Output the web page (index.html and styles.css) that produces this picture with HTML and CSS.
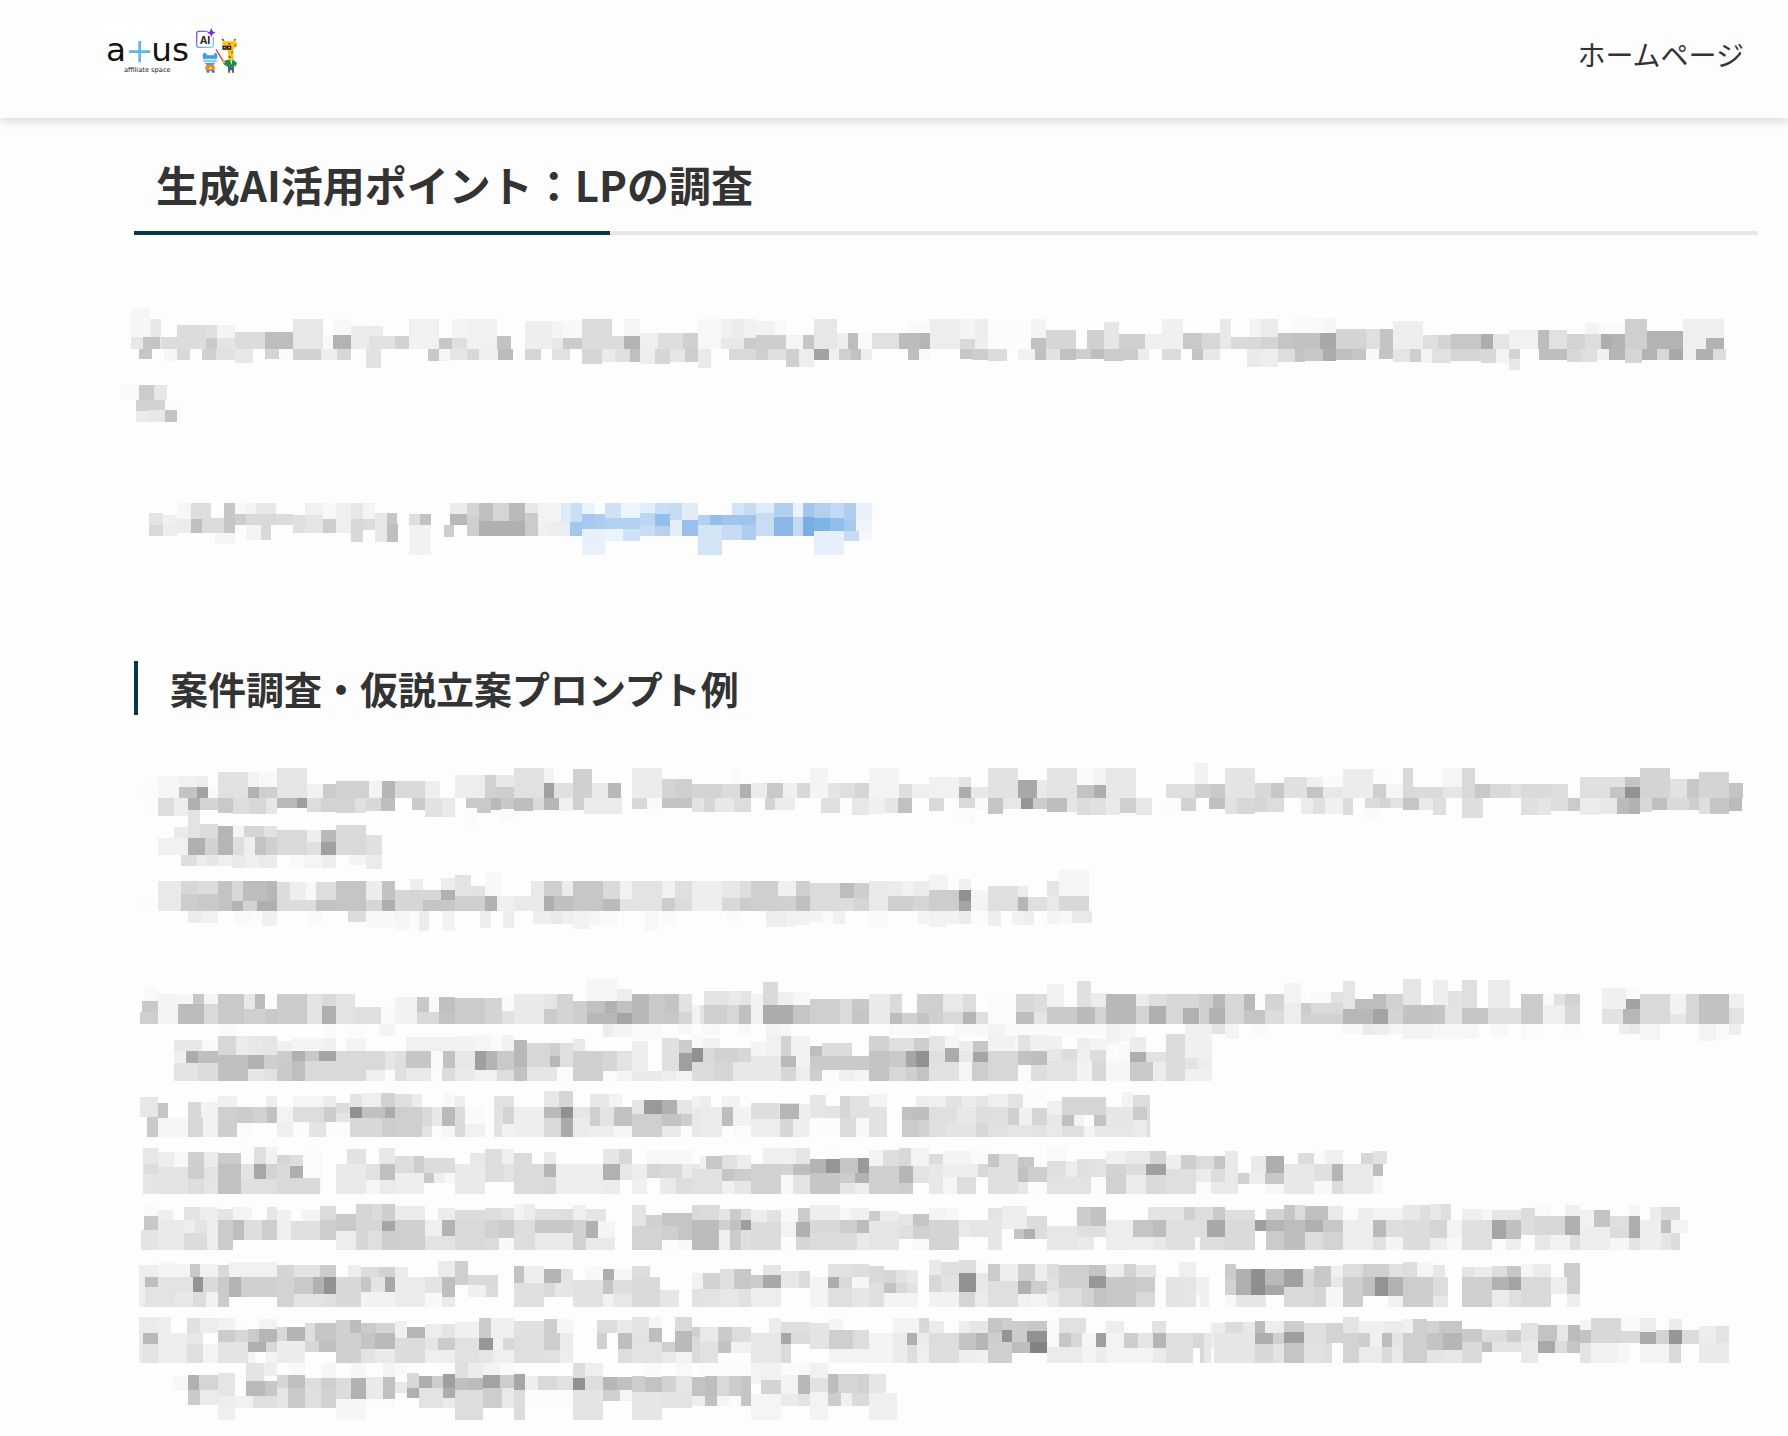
FILE: index.html
```html
<!DOCTYPE html>
<html lang="ja">
<head>
    <meta charset="UTF-8">
    <meta name="viewport" content="width=device-width, initial-scale=1.0">
    <title>生成AI活用ポイント：LPの調査</title>
    <link rel="stylesheet" href="styles.css">
</head>
<body>
    <header class="site-header">
        <a class="logo" href="#" aria-label="a+us affiliate space">
            <svg viewBox="36 36 414 192">
                <defs>
                    <linearGradient id="aiFrame" x1="0" y1="0" x2="1" y2="1">
                        <stop offset="0" stop-color="#8a3cf0"/>
                        <stop offset="1" stop-color="#74dcec"/>
                    </linearGradient>
                </defs>
                <text class="logo-main" x="48" y="152">a</text>
                <path d="M149 93v64M117 125h64" stroke="#5cb6e8" stroke-width="8"/>
                <text class="logo-main" x="184" y="152">us</text>
                <text class="logo-sub" x="102" y="185">affiliate space</text>
                <!-- AI -->
                <path d="M353 64h-27q-6 0-6 6v36q0 6 6 6h38q6 0 6-6V82" fill="none" stroke="url(#aiFrame)" stroke-width="4"/>
                <text class="logo-ai" x="329" y="102">AI</text>
                <path d="M364 54l4 10 9 4-9 4-4 10-4-10-9-4 9-4z" fill="#7a2be8"/>
                <!-- マスコット -->
                <path d="M338 142q-2-14 8-14l6 8h18l6-8q8 2 6 14l-5 10q0 14-17 14t-17-14z" fill="#3aa0ea"/>
                <path d="M336 151l12-5h26l11 5-6 8h-37z" fill="#d5edfb"/>
                <path d="M341 153h38" stroke="#2778bd" stroke-width="2"/>
                <path d="M349 165h22l5 8-5 11h-22l-4-10z" fill="#f08a24"/>
                <path d="M350 180v8h8v-8M365 180v8h9v-8" fill="#3a83c9"/>
                <circle cx="361" cy="174" r="4" fill="#ffd36b"/>
                <path d="M378 118l22 36" stroke="#e23a3a" stroke-width="4"/>
                <path d="M402 92l-6-5M432 92l4-5" stroke="#8a5a20" stroke-width="5"/>
                <path d="M398 94h38q8 4 4 12l-10 14 1 34h-16l-1-32-14-2q-5-14-2-26z" fill="#f9bf22"/>
                <path d="M415 99h6v6h-6zM434 104h5v6h-5zM424 124h5v6h-5zM416 138h6v6h-6z" fill="#a8641c"/>
                <path d="M399 109h9v8h-9zM413 109h9v8h-9zM408 112h5" fill="none" stroke="#222" stroke-width="4"/>
                <path d="M400 153l12-3h18l11 8-4 12h-25l-12-8z" fill="#208a43"/>
                <path d="M398 153l6 6M437 168l-6 2" stroke="#f9bf22" stroke-width="6"/>
                <path d="M421 151l3 14 3-14z" fill="#fff"/>
                <path d="M414 169h18v12h-18z" fill="#2b68b2"/>
                <path d="M414 179h6v9h-6zM426 179h6v9h-6z" fill="#8d5a26"/>
            </svg>
        </a>
        <nav class="site-nav">
            <a href="#">ホームページ</a>
        </nav>
    </header>

    <main class="article">
        <h2>生成AI活用ポイント：LPの調査</h2>
        <svg class="mosaic" id="intro" viewBox="0 0 1788 150" aria-hidden="true"></svg>
        <svg class="mosaic mosaic-link" id="link" viewBox="0 0 1788 90" aria-hidden="true"></svg>
        <h3>案件調査・仮説立案プロンプト例</h3>
        <svg class="mosaic" id="summary" viewBox="0 0 1788 190" aria-hidden="true"></svg>
        <svg class="mosaic mosaic-list" id="list" viewBox="0 0 1788 460" aria-hidden="true"></svg>
    </main>

    <script src="script.js"></script>
</body>
</html>
```
FILE: styles.css
```css
:root {
    --bg: #fdfdfd;
    --text: #333;
    --main: #04384c;
    --line: #e8e8e8;
}

* {
    box-sizing: border-box;
    margin: 0;
    padding: 0;
}

body {
    background: var(--bg);
    color: var(--text);
    font-family: "Noto Sans CJK JP", sans-serif;
}

a {
    color: inherit;
    text-decoration: none;
}

.site-header {
    display: flex;
    align-items: center;
    justify-content: space-between;
    height: 118px;
    padding: 0 44px 10px 102px;
    background: var(--bg);
    box-shadow: 0 2px 10px rgba(0, 0, 0, 0.18);
}

.logo svg {
    display: block;
    width: 138px;
    height: 64px;
    background: #fff;
}

.logo-main {
    font: 98px "DejaVu Sans", sans-serif;
    fill: #111;
}

.logo-sub {
    font: 20px "DejaVu Sans", sans-serif;
    fill: #222;
}

.logo-ai {
    font: bold 32px "Liberation Sans", sans-serif;
    fill: #222;
}

.site-nav {
    font-size: 28px;
    line-height: 40px;
}

h2 {
    margin: 37px 30px 55px 134px;
    font-size: 42px;
    line-height: 58px;
}

h2::before {
    content: "";
    float: left;
    width: 22px;
    height: 58px;
}

h2::after {
    content: "";
    display: block;
    height: 4px;
    margin-top: 18px;
    background: linear-gradient(90deg, var(--main) 29.3%, var(--line) 29.3%);
}

h3 {
    margin: 91px 30px 35px 134px;
    padding-left: 32px;
    border-left: 4px solid var(--main);
    font-size: 38px;
    line-height: 54px;
}

/* モザイク */
.mosaic {
    display: block;
    width: 100%;
    height: auto;
    shape-rendering: crispEdges;
}

.mosaic-link {
    margin-top: 40px;
}

.mosaic-list {
    margin-top: 30px;
}
```
FILE: script.js
```javascript
// 各列の開始位置と幅（データは1568分割）
const columns = {
    a: [120, 600],
    b: [700, 560],
    c: [1200, 580],
    d: [120, 780]
};

// [列, 基準線, "x,端,色 ..."]  色のないxは空白、端は基準線の上でも下でもよい
const mosaics = {
    intro: [
        ['a', 177, '29,54,f6 78,87,e8 107,141,dc 149,105,dc 225,105,e0 253,105,f4 301,126,dc 379,126,bd 452,87,e7 531,135,f8 557,87,f8 604,108,ec 651,108,eb 687,138,e1 719,138,d2 755,87,f1 834,144,c6 868,87,f3 907,87,f1 985,138,c3 1022 1058,93,ee 1129,93,f4 1158,93,f8 1207,87,dc 1286,138,dc 1317,87,f5 1359,129,ef 1406,129,de 1471,129,d0 1511,87,f7 1568'],
        ['a', 177, '29,141,e8 60,141,c4 105 225,144,ca 253,144,e4 301 557,135,b3 604 651,138,e1 687 868,144,e0 907 1129,144,e8 1158,144,cb 1207 1317,138,b3 1359'],
        ['a', 177, '50,207,c6 84 115,213,f6 149,210,d8 183 214,210,d0 251,210,e1 301,219,e8 348 379,207,d4 416,207,fa 452,210,d2 525,210,ee 567,210,d7 604 643,234,e2 682 805,213,c8 834,213,f5 862,210,e6 907,210,d8 938,210,ef 988,210,bb 1027 1058,210,d6 1100 1129,210,e1 1176 1207,222,d6 1260,216,ea 1294,216,e0 1333,216,bf 1359,222,ed 1398,222,d6 1437,216,e6 1477,216,cd 1511,234,ec 1544'],
        ['a', 330, '0,285,f9 50,285,cb 89,285,e7 123'],
        ['a', 330, '42,363,d2 76,360,d2 118,360,fb 149'],
        ['a', 396, '42,363,eb 76,360,e8 118,360,c3 149'],
        ['b', 177, '0,87,f7 59,87,f1 90,87,eb 123,87,f1 157,93,f2 210,93,f9 241,135,f5 288,135,c6 319,87,e7 384,129,ee 414,129,bd 442,129,f9 482,129,e1 557,129,bc 588,96,f9 644,87,ed 728,87,f4 770,87,ed 806,87,fc 889 927,87,f4 969,120,d6 1053 1084,120,d0 1131,96,e6 1173,132,d0 1246,132,f0 1294,87,f0 1352,129,c9 1406,129,d7 1456,87,e9 1487,141,d9 1540,87,f4 1568'],
        ['b', 177, '59,144,e8 123,144,cb 157,135,ce 241 588,129,bc 616,129,b5 644 728,147,d9 770,147,ef 806 927,144,c1 969 1540,141,d9 1568'],
        ['b', 177, '0,234,ea 31 81,210,d9 157,210,cf 190,210,df 241,231,d0 277,231,ed 319,210,a2 361,210,f0 389,210,cf 423,210,c2 451,210,ee 482 582,210,bf 613,210,f9 644 728,207,c7 762,210,cd 806,213,dc 860 890,210,f1 938,210,c0 969,210,e2 1008,210,c1 1053,207,ce 1095,207,be 1131,213,cb 1187,210,cc 1226,210,ed 1257 1294,210,dc 1347 1378,210,c4 1408,210,e6 1456 1532,231,e9 1568'],
        ['c', 177, '0,129,c9 5,129,d7 54,87,e9 84,141,d9 135,87,f3 165,87,eb 211,129,c5 251,84,fa 301,84,f9 338,84,f6 368,117,d4 449,117,df 487,117,c4 522,93,ee 603,135,df 643,135,d3 679,132,c7 760,132,ad 792,132,e5 835,120,f1 914,120,bd 944,120,e1 992,132,d3 1041,99,f3 1079,99,fa 1149,87,cf 1208,123,b3 1306,87,ef 1417'],
        ['c', 177, '135,141,d9 165,141,d4 211 251,129,c2 324,129,a7 368 1041,132,dd 1084,132,ae 1114,132,b4 1149 1368,144,b3 1417'],
        ['c', 177, '0,210,c4 8,210,e8 54 127,231,ea 165,231,ed 211,216,dd 257,216,c4 284,213,c8 333,213,ac 368,210,bf 411,210,c5 449,207,f8 484,207,c4 522,216,e5 568,216,cf 597,219,f4 627,219,e1 679,213,d5 760,219,d8 800,219,f3 835,240,e8 865 916,210,be 992,216,d8 1030,216,df 1073,210,f0 1106,210,b5 1149,219,d5 1195,210,b3 1235,210,d8 1268,210,a8 1306,210,f0 1341,210,b0 1387,210,dd 1422'],
        ['c', 177, '835,207,d4 865']
    ],
    link: [
        ['d', 69, '115,117,f6 143,117,dd 183 209,159,c6 231,102,f8 253,102,f3 273,102,e8 314 372,105,f1 408,117,f8 434,117,ef 464,117,e7 488,117,f4 513 663,102,ec 698,108,d5 722,123,c0 750,123,d5 782,168,b9 814,99,e8 840,126,f3 887,126,dfeaf7 907,126,c8def4 929,102,ebf3fb 955 975,114,cfe1f6 1007,114,ecf4fc 1045,99,e3eef9 1075,102,c8def4 1106,120,c5daf3 1130,120,e2ecf9 1162 1230,105,d2e4f6 1254,105,c5dbf3 1279,99,dfebfa 1315,111,b3cfee 1353,111,e9f2fb 1373,111,a3c6ed 1395,114,b3d0ef 1427,114,c1d9f2 1455,123,b1cdee 1480,123,e9f2fb 1512'],
        ['d', 168, '58,99,e4 86,105,f0 115 698,108,cf 722,123,b0 814,99,cb 840,126,f0 864,126,e9eef4 905,126,a3c8ef 929 1075,138,b7d2f0 1106,120,e5eef9 1130,120,9ac1ec 1162 1279,99,c8ddf3 1315,111,8ab6e8 1353,111,c3daf4 1373,111,7aade4 1395'],
        ['d', 168, '58,135,d9 86,135,ed 115'],
        ['d', 159, '115,117,ec 143,117,c0 164,114,dc 209 348,105,df 372,105,e5 408,117,cd 434,117,ef 464'],
        ['d', 159, '191,192,f5 231'],
        ['d', 135, '231,102,cd 253,102,d9 314,102,dc 348 581,102,df 603,102,c2 625 663,102,b9 698 1162,105,b3d0f0 1186,105,93beea 1210,105,a0c4ec 1279'],
        ['d', 135, '253,180,f3 283,180,d9 304 581,225,f2 625 651,171,cd 671 1162,225,d3e4f5 1210,180,c6dbf3 1250,180,adcdef 1279'],
        ['d', 186, '464,117,d8 488 513,99,e8 537,132,bf 559'],
        ['d', 150, '488,117,dc 513'],
        ['d', 132, '537,99,c6 557'],
        ['d', 147, '929,102,a5c9ef 955,102,accdf1 975,114,b2d1f1 1045'],
        ['d', 138, '1045,99,bed7f1 1075,102,94bfea 1106'],
        ['d', 147, '929,225,e8f1fb 975,183,ebf3fb 1011,183,cfe2f5 1045'],
        ['d', 138, '1045,168,c8ddf4 1075'],
        ['d', 153, '1395,114,7eb3e7 1427,114,8fbfec 1455,123,a6caee 1480,123,eef5fd 1512'],
        ['d', 153, '1395,225,e7f0fa 1455,183,c6dbf4 1485,180,f5f9fe 1512']
    ],
    summary: [
        ['a', 144, '60,99,fb 99,78,f6 154,78,f1 201,78,ed 230,111,f8 256,66,e1 335,66,f3 363,66,f8 410,54,e5 489,102,f1 531,102,cb 564,93,d1 651,93,f3 685,93,b6 719,93,d9 797,93,ee 836 875,75,ed 954,75,d1 983,75,e8 1030,54,e1 1108,54,f3 1134,99,e0 1184,57,d0 1233,99,ea 1275,99,b8 1309 1338,54,ec 1416,87,d4 1450,87,cf 1495,102,d4 1568'],
        ['a', 144, '154,111,c4 201,111,a2 230 335,111,b1 363,111,cf 410 983,111,cd 1030 1108,99,a1 1134'],
        ['a', 144, '68,195,fb 99,198,dd 141,198,ee 178,180,b0 209,180,d4 256,189,c9 295,192,dd 340,192,d7 382,192,e6 410,174,b9 463,174,9e 489,186,dd 525,186,d3 564,189,d3 614,189,e0 643,183,d8 682,183,be 719 763,180,c9 797,201,e2 841,201,ea 875 904,174,c9 933,189,c9 970,180,b9 996,177,c8 1030,183,be 1079,180,da 1108,180,b6 1147,183,f0 1184,180,cf 1213,192,eb 1312 1338,177,d8 1377,177,f9 1416,174,c4 1495,186,e2 1526,186,d8 1555,186,e5 1568'],
        ['a', 180, '178,264,e3 209'],
        ['a', 174, '904,240,fb 933'],
        ['a', 177, '996,213,fa 1030'],
        ['a', 315, '99,264,f1 141,231,ea 178,264,b0 209,222,dc 256,228,b5 295,228,f4 324,228,d5 376,228,e2 410,240,d9 489,240,ee 525,240,b8 564,225,d9 643,255,e0 685'],
        ['a', 315, '141,264,f1 178,264,b0 222,264,d2 256 295,261,de 324,261,ee 353,261,c3 382,261,cf 410 489,276,e1 525,276,a0 564'],
        ['a', 315, '159,348,de 201,348,ec 227,348,e6 256,348,ef 293,354,ea 329,354,f0 364,354,eb 410 444,354,f9 481,354,f5 528,354,ee 564 598,345,f3 643,357,eb 685'],
        ['a', 483, '50,447,fb 99,393,e9 159,393,d7 204,393,dd 256,393,c3 293,393,d8 321,393,bd 384,393,b6 410,396,dc 444,396,ee 486,396,f8 512,396,dd 564,393,c5 643,393,ec 685,393,c2 719,420,d6 758,387,ee 792,420,d7 839,384,ed 875,375,e3 917,408,e2 954,366,f8 996,438,ee 1030,438,ea 1074,393,e9 1108,393,cf 1155,393,ec 1184,393,c7 1262,393,da 1307,393,f1 1338,393,e3 1416,393,f1 1450,393,df 1495,393,ee 1568'],
        ['a', 483, '159,432,cd 204,432,ca 256 293,453,b4 321,453,d3 358,453,af 410 444,450,dd 512,450,c2 564 643,450,d6 685,450,ae 719 758,420,d6 792,450,c5 839,420,b0 875,438,cf 954,438,b2 985,438,ef 1030 1108,438,ae 1134,438,c0 1184 1262,447,bb 1307,447,e3 1338 1416,444,cc 1450,444,dc 1495'],
        ['a', 483, '839,450,c7 875'],
        ['a', 483, '178,519,ec 211,519,f1 256 299,528,f9 342,528,fb 371,528,f0 410 489,528,fa 528 596,516,dc 643,531,f8 719,540,f6 755,540,fb 781,543,ed 808 844,543,f2 875 941,534,ed 970 1001,534,ed 1030 1079,522,ee 1126,522,e9 1155,522,f0 1184,537,f2 1228,525,f5 1254,525,f9 1299 1372,543,f7 1405,528,fa 1450'],
        ['b', 144, '0,102,d3 62,102,dc 90,57,fb 112,102,b1 143,99,ec 188,99,c9 232,99,f0 272,99,d8 308,54,f4 358,99,e4 392,99,e0 434,99,d5 473,54,f3 557,102,de 594,102,ef 641,81,f1 725,81,e5 759,111,e8 806,54,e2 890,90,a8 944,90,e9 972,54,e3 1056,54,fa 1103,54,f3 1137,54,e8 1221 1305,102,df 1386,39,f2 1422,102,c8 1470,54,e3 1554,99,dd 1568'],
        ['b', 144, '90,102,dc 112,102,b1 143 725,111,ad 759 1056,105,c3 1103,105,ae 1137 1386,102,d0 1431,102,c8 1470'],
        ['b', 144, '0,186,e5 11,186,d6 42,186,e8 95,186,dd 143 182,180,d3 210,180,ec 266 339,189,df 392,195,fb 426,195,e7 473,192,f0 518,189,e6 554,189,c1 594 641,183,d9 683 725,174,d9 770,180,f9 806,192,c5 848,177,e7 899,177,95 932,177,cc 972,186,bd 1028,186,e5 1056,195,dc 1092,195,e0 1137,195,ea 1176,189,cf 1221,195,e7 1266 1305,183,fb 1347,183,d2 1389 1425,177,c0 1470,192,e2 1504,192,d6 1554,186,d8 1568'],
        ['b', 174, '725,222,fb 770'],
        ['b', 483, '0,393,ee 62,393,e7 112,393,dd 143,393,cf 218,393,f0 269,393,cf 308,399,db 392,399,bd 431,399,ce 473,393,e9 526,393,eb 566,393,f2 596,393,ec 641,375,f3 694,420,cf 725,387,ef 759,420,f5 806,408,df 890,408,ec 918,441,df 972,393,e6 1005,360,f5 1089'],
        ['b', 483, '62,444,d8 112,444,cb 143 218,438,d1 269,438,bf 308 392,444,dd 431,444,d5 473 526,438,cf 596,438,d5 641,420,cd 725,420,8f 759 890,441,b6 918 972,438,e9 1005,438,d8 1089'],
        ['b', 483, '725,453,a4 759,453,f3 806'],
        ['b', 483, '76,513,fa 115 185,531,ed 241,531,f1 269,525,f1 308,516,f3 341,513,f9 372,522,f0 406 473,531,fa 526 610,522,f4 641,531,f2 689,522,f2 725,522,ec 759,522,fb 806,528,ee 843 874,525,f2 904,525,ee 935 972,522,f4 1008,522,f8 1042,519,e9 1098'],
        ['c', 144, '0,39,f2 22 0,102,d0 30,102,c9 68,54,e4 149,99,d8 192,99,c7 227,81,e0 289,81,f0 333,81,fa 387,57,ec 468,57,fb 503,102,f5 549,54,d9 576,111,db 657,54,f5 708,54,d9 743,102,c9 784,102,d9 841,102,e1 868,102,da 949,102,dd 995 1027,81,df 1108,81,e1 1149,81,c5 1190,54,d4 1271,87,e2 1317,87,c8 1349,66,d4 1430,99,c4 1468'],
        ['c', 144, '289,111,c4 333,111,e8 387 468,102,cf 503 657,111,e6 708 1108,111,c5 1149,111,92 1190'],
        ['c', 144, '24,177,c0 68,192,e1 100,192,d7 149,186,d5 181,186,dd 227 273,192,eb 305,192,e0 338,192,f0 387,195,dc 414 446,174,dc 487,174,d5 514,174,e3 549,180,c5 592,180,ea 630,195,df 665 708,204,de 765 868,195,df 911,195,e5 949,183,dd 995,183,cb 1027,195,eb 1081,192,e8 1127,192,bb 1160,192,b1 1190,186,d7 1222,180,bf 1263,180,da 1322,180,ce 1349,192,df 1379,192,c6 1430,183,bb 1465'],
        ['c', 174, '446,210,fa 487']
    ],
    list: [
        // 1行目
        ['a', 162, '52,126,cf 57,93,c9 63,51,f9 99,72,f4 152,72,f6 191,72,c7 220,72,f5 256,72,c9 324,72,e8 353,72,bb 379,72,fc 410,72,cb 489,72,e4 528,72,da 564,72,e3 614,111,df 682,111,fa 719,81,f2 776,81,c8 808,81,f9 834,81,c0 875,84,cc 954,84,d4 998,84,fa 1030,72,ea 1108,72,e5 1142,72,d4 1184,93,cd 1220,27,f5 1299,57,ed 1338,72,b8 1382,72,c9 1424,72,c4 1461,72,e2 1495,105,f2 1526,63,e4 1568'],
        ['a', 162, '63,93,c9 99 152,102,bb 220,102,d9 256 324,117,d0 379,117,c9 410 528,108,b0 564 776,126,d9 834 998,123,e2 1030 1108,117,cb 1142,120,d4 1184 1220,93,c1 1268,93,b2 1299,93,c1 1338 1424,126,c8 1461,126,d6 1495 1526,105,d0 1568'],
        ['a', 162, '52,126,cf 99 834,126,c3 875 1220,129,b7 1299,129,a5 1338'],
        ['b', 162, '0,105,e4 11,63,e4 81,63,ea 115,63,e3 143,72,f2 176,36,da 218,66,f0 260,66,f7 308,87,cf 392,87,db 426,87,c8 473,72,ea 532,72,da 566,129,cb 608,72,d0 641,72,cf 680,72,e9 736,72,dd 773,126,df 806,72,fb 885,72,d8 935,72,dd 972,42,f1 1019,111,cc 1056,33,e0 1095,69,ec 1137,72,b8 1221,72,ec 1257,72,df 1305,72,d7 1397,72,cf 1436,72,b8 1470,72,d4 1523,72,b6 1554,72,f8 1568'],
        ['b', 162, '11,105,cf 76,105,d8 109,105,c0 143 176,105,ac 260,105,c5 308 426,123,c5 473 532,129,bd 566,129,d0 608,129,c4 641 680,126,d9 736,126,b5 773 885,126,be 935,126,e4 972,111,c9 1056,111,ba 1106,111,d3 1137 1221,108,d3 1257,108,b0 1305 1352,114,b1 1397,114,dc 1425,114,b0 1470 1523,120,c3 1568'],
        ['c', 162, '0,72,cf 35,72,b8 68,72,d7 119,72,b9 149,72,fb 176,72,d4 227,39,f3 273,99,cc 300,66,f9 354,66,e2 387,33,e5 419,87,bd 468,72,bd 503,72,d1 549,27,e5 597,105,c5 630,30,ee 670,63,e2 708,30,df 749,114,c8 779,30,eb 838,114,dd 868,72,cb 927,72,f9 957,72,e2 987,72,d2 1027 1087,54,f0 1152,54,fa 1190,72,d9 1271,72,f2 1314,72,d7 1349,72,c1 1430,72,f0 1471'],
        ['c', 162, '24,114,b2 68 119,120,c5 176,120,dc 227,99,ed 273,132,d1 300,99,d9 333,99,d9 387,117,b7 468,117,a3 508,117,d4 549,105,c2 630,105,c4 662,105,e3 708,114,c5 779,114,df 868 927,105,ef 987,105,d7 1027 1087,117,e2 1144,117,b7 1152,87,a2 1190 1271,132,e6 1314 1430,114,e3 1471'],
        ['c', 162, '273,132,d1 387 1144,117,b7 1190'],
        ['a', 162, '256,198,fa 303 536,201,f9 564 591,195,fb 643 677,198,f4 719 1262,201,ed 1288,201,f4 1338,207,f9 1416 1461,192,f7 1495 1526,195,f8 1568'],
        ['b', 162, '0,192,fc 8,195,f9 39 106,195,f8 143 185,216,f4 227,198,f7 255 529,195,f9 599,195,f8 641 714,195,f8 764,198,f8 806,198,f3 854,195,fa 1137,222,f2 1173,216,f6 1221 1358,192,f0 1400,192,ec 1434,192,e3 1470,207,f3 1509 1543,195,fa 1568'],
        ['c', 162, '0,192,ef 32,192,e4 68,207,f4 105 138,195,fa 187 387,192,f7 441,195,eb 468,195,ee 511,192,f5 549,207,f3 630,207,f7 708,204,f7 754 784,201,f8 834 868,210,fb 914 984,198,fb 1027 1133,192,ee 1159,192,e9 1190,210,f5 1244 1349,213,f3 1395,210,fa 1430,195,ee 1463'],
        // 2行目
        ['a', 333, '141,210,e8 214,210,f9 256,198,d7 303,198,ec 335,198,e8 375,198,e5 410,213,f0 449,204,f4 531,204,f0 564,243,d9 591,204,f4 643,243,d9 693,243,e6 719,243,df 747,201,f1 875,198,f2 928,195,f5 970,195,fa 998,195,f2 1030,210,b8 1064,219,d7 1124,219,cd 1150,219,df 1184,207,e9 1215,243,d0 1299,243,e3 1338,213,ee 1380 1416,204,e0 1461,210,cc 1495,192,f9 1524,204,f2 1568'],
        ['a', 333, '141,243,f0 172,243,ac 204,243,bf 256,255,c0 335,255,b2 376,255,ce 410,243,cc 449,243,b0 483,243,c8 520,243,a5 564,243,d9 693,243,e6 719,243,df 747,243,c6 813,243,fa 844,243,c2 875,243,e7 928,243,9f 956,243,b3 985,243,c9 1030 1124,258,b7 1150,261,df 1184,243,d0 1262,243,d6 1299,243,e3 1338 1461,249,9f 1495,234,91 1524,234,da 1568'],
        ['a', 333, '141,279,e4 204,279,dc 256,297,c0 335,297,e6 376,297,e1 410,276,ca 449,273,bf 483,273,d9 643,300,ef 693,300,fb 719,303,df 747,294,e9 813,294,fb 841,294,dc 875,300,ea 928,300,f1 985,300,de 1030,291,c2 1064,291,e5 1142,291,fb 1184,303,cf 1262,303,fb 1299,303,f4 1338,303,ea 1416,303,ee 1453,303,f3 1495,276,dc 1552,276,d2 1568'],
        ['b', 333, '0,234,da 143,216,f4 185,195,f1 227,198,d2 255,198,f2 308,228,bd 342,219,dc 426,258,c7 473,198,d2 529,204,e0 599,204,cd 641,198,e6 686,198,f5 725,213,ec 764,213,c7 806,198,f2 882,198,f7 890,195,e2 924,195,f0 972,198,f0 1014,237,dd 1056,204,ee 1092,204,f4 1137 1204,201,ec 1249,246,e2 1305,192,dc 1358,192,f0 1434'],
        ['b', 333, '0,234,92 8,234,da 39,234,d2 106,234,d7 143,258,e7 227,258,b9 269,261,f2 308,258,ca 473,243,c3 529,243,c9 577,243,a6 605,243,91 641,243,e0 686,234,ab 725,243,e8 764,246,a5 806,243,d7 890,243,c2 927,243,be 972,237,e7 1014,237,dd 1056,237,f0 1092,240,dd 1137,222,fb 1173,222,f9 1204,246,ae 1249,246,e2 1305 1358,264,e3 1394,264,ed 1428'],
        ['b', 333, '0,276,dc 39,276,d6 92,276,e8 227,291,d6 269,291,ed 308,300,cf 342,300,fb 389,300,ef 434,300,f4 473,291,c3 529,291,d7 577,291,cf 608,291,c3 641,276,e2 725,276,f5 762,276,cd 806,276,d7 890,285,fb 927,285,de 972,273,e3 1056,273,f2 1098,273,d8 1137,276,f6 1204,276,ca 1268,276,ed 1305,276,db 1358,297,f0 1428'],
        // 3行目
        ['a', 501, '52,381,e7 99,444,f5 178,396,d7 212,396,f2 256,378,f0 306,411,ce 382,378,ee 410,411,f3 452,378,f5 531,378,ec 564,399,dc 601,372,e3 632,369,ef 682,369,d2 719,372,df 763,372,ec 789,411,d9 847,366,f8 875,378,ed 902,411,fa 954 977,378,e2 1030,411,ee 1108,363,e8 1147,363,d6 1184,411,e7 1228,372,e8 1278,372,f3 1312,411,c3 1338,390,e6 1369,390,99 1416,390,b0 1456,390,e5 1495,378,f2 1544,411,ec 1568'],
        ['a', 501, '52,441,fd 71,441,ca 99,444,f6 178,444,d7 217,444,f2 256,411,cf 306,411,cb 348,411,d1 384,411,c1 410,411,f3 452,411,dd 533,411,cc 564,429,e5 601,411,91 632,411,c1 693,411,ab 719,411,cf 789,411,d9 815,411,e8 841,411,b9 875,411,dc 902,411,fa 954 1001,411,d3 1030,411,ee 1108,411,b9 1152,411,91 1184,411,e6 1228,411,cf 1254,411,e3 1291,411,c2 1338,432,cf 1416,432,c3 1466,432,ce 1495,411,e9 1568'],
        ['a', 444, '99,399,c5 125'],
        ['a', 501, '256,459,ce 306,459,fb 348,459,fd 410,456,ef 452,456,fc 494,456,e4 538,456,fc 601,444,d8 685,444,cd 719,444,cf 789,468,e4 815,468,fc 841,468,f6 875,462,da 902,462,f1 954 998,462,f1 1030 1108,444,d9 1152,444,ab 1184,444,eb 1228,468,ee 1291,468,f6 1338,468,cf 1416,468,ea 1466,468,fc 1495'],
        ['b', 501, '0,378,ed 31,411,eb 62,378,f2 112,411,f3 143,399,de 221,399,e6 277,402,ee 308,375,e6 353,408,e4 392,378,d6 420,378,e1 473,372,f3 524 566,411,c3 605,378,ee 641,378,ef 689,378,e2 734,378,ec 773,378,e6 806,372,ef 862,372,e3 904,372,fb 972,393,ef 1014,381,d6 1137,411,e7 1182,366,f3 1212,375,dd 1260'],
        ['b', 501, '0,411,eb 62,411,bd 92,411,f2 143,447,ed 224,402,b5 277,447,f2 308,444,fc 392,444,db 437,444,f8 473,411,e2 524 566,411,c2 597,411,be 641,411,df 720,411,e8 773,411,de 806,411,df 862,414,d0 893,414,f0 930,414,d5 972,435,e7 1014,435,bf 1047,435,f3 1075,435,fc 1103,435,c2 1137,411,e6 1212,411,cb 1252'],
        ['b', 501, '62,468,fd 92,468,fb 143,447,ed 224,447,d6 260,447,ee 308 566,450,cb 613,450,d2 641,450,df 689,459,e4 773,459,d7 806,465,e1 862,465,e6 930,465,e3 972,468,e9 1014,468,df 1075,468,f3 1106,468,e7 1212,450,eb 1252'],
        // 4行目
        ['a', 672, '60,534,e7 99,546,ed 141,546,f7 178,546,cf 220,546,eb 256,549,cb 316,531,fb 350,531,df 382,531,f2 410,555,d6 444,555,de 478,540,fb 530 564,582,ea 593,537,e2 643,582,e7 677,534,e8 719,558,dd 768,558,cd 794,564,dc 875,582,ea 915,549,e8 954,537,de 998,537,ef 1030,549,db 1077,582,dd 1108,546,ea 1139,582,ee 1262,537,e6 1304,537,d7 1338,582,ec 1377,540,f7 1495,582,e7 1531,558,c7 1568'],
        ['a', 672, '63,582,dd 99,591,e4 178,591,cd 220,591,e3 256,582,c1 316,582,e4 350,582,a7 382,582,d3 410,582,da 444,588,ae 478,624,d9 523 564,582,ea 643,582,e1 679,582,c0 719,609,ee 794,609,c8 821,609,ee 849,609,f8 875,582,ea 954,582,dd 1004,582,e3 1030,582,db 1108,582,b6 1139,582,ee 1262,582,b1 1307,582,e7 1338,582,ed 1377,582,d5 1412,582,d9 1469,582,eb 1495,597,e1 1568'],
        ['a', 672, '63,612,e5 99 178,627,dd 220,627,e5 256 316,627,df 410,624,d9 478 643,630,f6 679,630,eb 719 794,639,fd 875 954,636,fd 1030 1108,621,da 1139 1262,630,ec 1307,630,fd 1338,624,f0 1377,624,fd 1411,624,ea 1453,624,dd 1495'],
        ['b', 672, '0,558,f0 17,558,c7 62,555,e1 104,555,ed 143,582,d1 176,534,ef 269,534,e5 308,567,b4 353,531,fb 392,564,c5 442,564,9a 473,540,f3 512,540,de 557,534,d9 591,534,f3 641,552,dd 680,543,f4 759,543,f9 806,552,c7 837,552,df 890,561,c7 935 972,531,f9 1025,573,ed 1056,567,df 1090,567,e3 1137,543,f0 1193,543,e9 1260,543,d4 1305,555,ee 1347,555,ce 1389,558,db 1439,558,c5 1470,543,e9 1506 1543,558,e7 1568'],
        ['b', 672, '0,597,e1 62,597,c5 95,597,cd 143,582,d1 227,582,d2 260,582,be 308,567,b4 353,567,95 392,564,c5 442,564,9a 473,588,cf 557,588,b6 596,588,e3 641,582,e8 680,582,ee 778,582,d8 806,591,df 890,591,c1 918,591,ce 972,573,df 1025,573,ed 1056,567,df 1090,567,e3 1137,582,d3 1193,582,dc 1249,582,a0 1305,597,df 1389,597,eb 1431,597,dc 1470 1506,609,d1 1537,609,eb 1568'],
        ['b', 672, '62,633,f0 95,633,e6 143 227,615,f8 260,615,e4 308,609,c6 392,609,cd 434,609,b2 473 557,639,cd 596,639,fd 641,621,e8 680,621,f5 720,621,dd 773,621,fd 806 890,636,e7 918,636,fb 972,621,e3 1095,621,fc 1137,615,d1 1193,615,ec 1249,615,da 1305 1389,636,fb 1431,636,ea 1470 1506,642,fd 1568'],
        ['b', 672, '392,639,e6 434,639,ed 473'],
        ['c', 672, '0,558,dd 38,558,c5 68,543,e9 103 138,558,ea 178,558,ae 227,582,e8 265,549,dd 308,540,fa 338,540,f0 387,582,e9 435,549,d7 468,543,e2 506'],
        ['c', 672, '0,597,ec 30,597,dd 68 103,609,d1 132,609,ed 176,609,c8 227,582,e8 308,582,e0 357,582,b5 387,582,e9 468,582,be 495,582,fd 506'],
        ['c', 672, '0,636,fb 30,636,ea 103,642,fd 176,642,f7 227 308,633,f8 357,633,dd 387 468,618,f7 495'],
        // 5行目
        ['a', 840, '63,708,fa 99,720,ef 139,750,ec 167,711,e3 209,711,ed 256,717,e4 295,711,f4 345 384,711,e7 410,720,f0 447 476,720,f3 523,708,db 564,732,c9 617,702,d5 659,702,dc 685,702,ce 719,708,eb 797,750,ef 831,714,ec 875,720,dc 954,714,dd 996,714,e3 1030,702,f3 1056,702,ec 1085,717,e1 1146,717,de 1184,705,ef 1218,717,e5 1270 1338,705,e4 1375,735,d0 1416,729,c5 1495,705,d9 1568'],
        ['a', 840, '55,780,e4 63,738,c8 99,750,ea 167,750,ee 196,750,e3 227 256,750,cb 295,750,be 324,750,de 371,750,cd 410,750,ef 447,753,e0 523,750,ce 564 617,750,d6 685,753,a5 719,750,cf 797,750,ef 841,750,b3 875,750,d9 954,750,d1 990,750,cc 1030,750,dd 1085,750,c8 1184,750,d1 1218,753,b1 1249,753,f4 1294 1338,768,d3 1416,768,cf 1457,768,c5 1495,750,bc 1568'],
        ['a', 840, '55,780,e4 99 167,789,dc 227 295,810,fd 564,783,ed 617 648,783,df 685,783,ce 719 797,798,e3 875 954,804,db 990,804,f8 1030 1085,789,ea 1184 1218,804,e9 1294 1416,810,fc 1457,810,f8 1495'],
        ['b', 840, '0,705,db 53,717,e5 84,717,cb 115,717,df 143,720,ed 188,720,e2 227,714,f8 274,714,cb 308,705,ee 392,714,f7 423,714,ef 473,723,cc 504,723,ed 557,732,e5 596,732,c5 641,714,f4 690,714,f7 725,750,ee 806,714,e4 846,708,ed 916,738,dc 972,768,e7 1056,711,cc 1095,711,c1 1137,750,ed 1254,711,e4 1355,711,d0 1386,711,de 1436,711,c3 1470,720,df 1554,750,9e 1568'],
        ['b', 840, '0,750,bc 53,750,d0 84,750,c1 115,750,9e 143,756,dc 227,756,f3 269,756,b0 308,750,d8 392,750,cd 440,750,bb 473,753,e5 557,768,df 596,768,d0 641,750,d4 725,750,e9 756,750,e5 806,750,e6 846,777,fd 879,777,c5 907,777,b0 938,777,dd 972,768,e7 1056,768,df 1137,750,ed 1212,750,c5 1268,750,bd 1305,750,df 1420,750,a9 1470,750,da 1554'],
        ['b', 840, '53,780,f0 84,780,cc 115,780,df 143 227,801,fc 269,801,d6 308,789,dc 440,789,ea 473 557,807,fd 594,807,f9 641 725,801,fd 806 846,807,fd 972 1056,801,e9 1103,801,fd 1137 1212,801,ee 1268,801,e8 1305 1386,801,f9 1420,801,de 1470'],
        ['c', 840, '0,711,de 35,711,ca 68,720,df 149,750,9e 178,717,d3 227,705,c6 257,705,dc 284,708,c0 346,708,e9 387,714,fb 427,714,ed 468,714,f3 549,705,e8 595,705,de 622,702,e8 652,702,df 679 708,717,ee 762,717,f6 789,720,e5 868,714,dd 906,705,f9 949,738,da 987,705,f0 1027,720,f1 1065,720,c4 1108,738,df 1160,705,f6 1190,750,ee 1217,711,ec 1246,711,dc 1298'],
        ['c', 840, '19,750,a8 68,750,da 149,750,9e 178,750,b5 227,750,bd 284,750,b0 333,750,c7 387,750,ee 468,750,ba 503,750,de 549,750,dc 622,750,d5 668,750,f3 708,750,df 789,750,a5 827,750,c0 868,738,dd 906,738,d8 987,738,b0 1027,771,ed 1108,771,dc 1160,738,ad 1190,750,ee 1246,750,c0 1273'],
        ['c', 788, '1273,750,f4 1319'],
        ['c', 840, '19,801,dd 68 149,783,fd 178,783,cb 227,783,be 284,786,dd 333,786,d3 387 468,801,e1 503,801,f4 549 622,804,ee 668,804,f8 708 789,807,fb 827,807,ee 868,795,fd 906,795,e7 946,795,f2 1000,795,df 1027 1108,804,f6 1160,804,e4 1190 1246,789,e6 1273'],
        // 6行目
        ['a', 1011, '50,885,ee 99,876,f4 144,882,f4 183,882,c9 209,882,f1 256,885,d9 285,876,f1 410,885,d5 455,885,e3 523,885,cc 564,921,d9 596,885,ed 630,891,dd 677,891,d2 719,891,eb 753,921,eb 831,873,ec 875,873,cf 909,915,da 988 1030,888,c3 1056,888,ee 1108,897,b3 1152,897,e4 1184 1215,888,f8 1262,897,ad 1291,897,f5 1338,888,dd 1385,921,da 1411 1495,909,f2 1524,909,d0 1568'],
        ['a', 1011, '65,921,be 99,921,e3 191,921,93 217,921,da 256,921,cb 285,921,b3 316,921,d0 410,921,d3 455,921,c9 504,921,b1 533,921,92 564,921,d8 630,921,c6 656,921,e4 693,921,a8 719,921,ec 797,921,e3 841,921,be 875,945,fd 909,945,f0 956,945,dc 988 1030,939,e0 1108,939,d9 1137,939,e6 1184,930,e2 1262,930,c5 1288,930,de 1338,921,da 1411,960,e6 1461 1495,957,e2 1568'],
        ['a', 1011, '65,951,e3 99 144,966,e8 191,966,dc 225,966,f2 256,981,cc 285,981,fd 410 455,972,e4 536,972,e0 564 630,966,f2 719 797,969,f8 841,981,ea 875,981,fd 988 1108,981,fd 1184 1262,972,f2 1288,972,e7 1338'],
        ['b', 1011, '0,909,f0 8,909,d2 56,897,df 95,897,c7 143,915,cd 176,885,e5 227,903,e8 277,903,dc 308,921,f3 358,882,e1 426,882,dd 473,888,d9 515,900,d6 549,900,e2 580,900,e9 610 641,870,e9 675,876,df 725,870,de 773,873,f9 806,882,cb 840,882,ee 890,882,cf 938,882,ed 972,882,dd 1005,885,cf 1089,885,c4 1137,882,ee 1187,882,d3 1221,885,e5 1277 1305,921,e4 1341,876,ef 1389,921,f0 1425 1470,882,cb 1501,897,b0 1543,897,8f 1568'],
        ['b', 1011, '0,957,e3 56,957,e8 106,957,e1 143,915,cc 176,915,a8 227,954,fd 308,921,f4 358,921,ac 389,921,d9 426,921,f6 473,939,df 515,939,c2 549,939,d9 580,939,e3 608 641,915,d7 675,915,e2 725,909,91 773,909,e8 806,933,df 890,933,b0 927,933,cd 972,921,e1 1005,915,d0 1089,918,97 1137,921,c8 1221,921,cb 1274,921,fd 1305 1341,921,e5 1389 1470,927,d2 1501'],
        ['b', 1011, '143,954,ed 227 358,954,df 426,954,e6 473 515,969,f4 610 641,966,f2 725,966,d5 770,966,eb 806 890,972,f2 927,972,f4 972,963,ea 1005,954,dd 1070,954,d3 1103,954,c3 1137 1221,966,da 1274 1389,975,fb 1425 1470,975,f8 1501,975,e6 1568'],
        ['c', 1011, '0,921,f0 24 68,882,cb 97,897,b0 138,897,8e 176,897,b9 227,897,a0 278,897,d7 308,888,c8 354,888,f0 387,882,dd 441,882,cf 511,882,e1 549,876,dd 587,876,f6 630,885,e7 662 708,891,e4 741,891,eb 789,888,dd 830,888,c7 868,882,f5 900,882,eb 949 984,879,cd 1027'],
        ['c', 1011, '68,927,d2 97 176,945,a7 227,951,da 308,951,d5 341,951,f6 354,921,e8 387,921,cd 441,921,c0 473,921,93 508,921,b2 549,921,cd 630,921,dd 670 708,921,cf 789,921,b2 835,921,a3 868,921,da 949,921,ee 992,915,cf 1027'],
        ['c', 1011, '68,975,f8 97,975,e6 178,975,fd 227 341,951,f6 387 441,978,fd 508,978,f2 549 630,978,e7 670 789,960,eb 835,960,df 868 949,972,fd 992,972,ee 1027'],
        // 7行目
        ['a', 1179, '50,1041,eb 99,1041,ee 133 175,1044,e0 209,1044,ed 256,1044,f2 301,1050,fb 335,1077,c9 363,1047,f3 410,1071,d8 436,1071,b4 483,1059,de 510,1059,c6 536,1059,ca 564,1050,d0 601,1050,bc 630,1059,cb 669,1059,d3 719,1053,f0 750,1071,b5 797,1062,ed 841,1062,e4 875,1056,f0 938,1044,cb 970,1044,ef 1030,1053,e1 1108,1047,cd 1142,1047,f6 1184 1247,1050,dd 1299,1050,e9 1338,1041,e4 1382,1041,f6 1416 1450,1041,da 1495,1071,d0 1524,1071,e8 1563,1071,bb 1568'],
        ['a', 1179, '60,1089,b9 99,1089,ed 175,1089,e7 217,1089,fd 256,1080,cc 301,1080,d7 335,1077,cb 363,1077,b6 410,1071,d8 436,1071,b4 483,1059,de 510,1059,c6 564,1089,d0 630,1089,c5 666,1089,b9 719,1104,dc 797,1104,e5 831,1104,cb 875,1104,e1 938,1104,97 975,1104,f0 1001,1104,d8 1030,1089,df 1108,1089,cd 1150,1089,eb 1184 1247,1089,d0 1273,1089,fd 1301,1089,be 1338,1089,e2 1382,1074,be 1416,1116,cf 1450,1083,ba 1495,1101,da 1568'],
        ['a', 1179, '60,1122,e3 99 175,1122,df 217,1122,f3 256,1116,e4 335,1116,b0 382,1116,d8 410,1113,ec 483,1113,d8 520,1113,c0 564 630,1137,e3 666,1137,ea 719 797,1140,ef 831,1140,ee 875 938,1140,e5 975,1140,ef 1030 1108,1140,e1 1150,1140,ed 1184 1247,1137,fd 1301,1137,dd 1338,1116,e3 1416 1453,1146,f3 1495'],
        ['a', 1179, '335,1146,f3 354,1146,fd 382,1146,f3 410 483,1146,fd 564 1416,1146,ea 1453'],
        ['b', 1179, '0,1071,e9 50,1071,ca 90,1071,dd 143,1089,e7 193,1044,ec 227,1056,df 308,1059,e5 361,1047,f4 400,1080,cf 428,1080,dd 473,1089,f4 540,1044,f3 613,1044,d8 641,1053,eb 683,1089,dd 725,1053,ed 756,1053,e6 806,1044,c5 846,1044,cd 874,1053,cc 916,1053,c8 972,1050,fa 1005,1044,e1 1081,1089,f0 1137,1053,ed 1187,1089,d0 1266,1053,e2 1305,1089,df 1431,1059,ee 1470,1056,da 1520,1056,e3 1554,1053,bb 1568'],
        ['b', 1179, '0,1116,e1 50,1116,c2 87,1116,f1 143,1089,e7 227,1089,a8 255,1089,db 308,1059,e4 361,1080,cf 428,1080,dd 473,1089,f4 540,1089,ec 580,1089,b0 608,1089,eb 641,1089,dd 725,1089,c4 773,1089,b5 806,1089,ce 846,1080,94 874,1080,cc 916,1083,92 972,1089,f9 1005,1089,c7 1039,1089,d7 1070,1089,f5 1109,1089,9f 1137,1089,f3 1187,1089,cd 1226,1089,e5 1268,1089,b5 1305,1089,df 1380,1089,d7 1411,1089,e8 1442,1089,e0 1470,1089,e6 1568'],
        ['b', 1179, '50,1149,fd 143 227,1122,db 255,1122,fd 308,1137,fd 361,1137,f3 473 580,1125,de 608,1125,ef 641 725,1140,ed 773,1140,f0 806,1116,cf 874,1116,be 924,1116,82 972,1131,eb 1070,1131,f4 1109,1131,ec 1137 1187,1134,f3 1268,1134,ea 1305 1380,1134,fd 1439,1134,e5 1470'],
        ['b', 1179, '874,1149,fd 972'],
        ['c', 1179, '0,1089,d8 11,1089,e7 30,1059,ed 68,1056,dc 116,1056,e8 149,1053,bb 176,1053,ed 227,1053,cd 281,1059,df 341,1059,d3 387,1041,e4 430,1053,f0 497,1053,eb 549,1047,f0 576,1047,cf 614,1053,d3 646,1053,c7 708,1077,c9 762,1080,dd 830,1080,cd 868,1059,e3 914,1065,c3 965,1065,e7 995,1065,bb 1027,1050,f3 1057,1044,d8 1138,1044,fa 1190,1044,ed 1233,1080,d3 1268,1047,eb 1303,1080,dc 1349,1068,ed 1395,1068,e3 1430'],
        ['c', 1179, '30,1134,fb 38,1089,e6 149,1089,ae 197,1089,d0 227,1086,9e 281,1086,df 341,1086,d3 387,1089,d3 430,1089,ce 460,1089,f0 492,1089,be 519,1089,e4 549,1089,cf 614,1089,c4 657,1089,b6 708,1116,da 762,1116,c1 789,1116,e4 868,1113,e9 914,1113,a9 960,1113,dc 992,1113,c5 1027,1080,c3 1057,1083,d8 1138,1083,da 1190,1086,aa 1233,1086,d3 1268,1080,96 1303,1080,dc 1349,1119,ea 1430'],
        ['c', 1179, '149,1122,d8 197,1122,e4 227,1119,c5 281,1119,e2 330,1119,df 357,1119,fd 387 430,1131,eb 492,1131,da 519,1131,e9 549 614,1140,e4 657,1140,e8 708 762,1146,fd 868 914,1149,fd 1027,1119,e4 1057,1119,f1 1127,1119,f6 1160,1119,fd 1190,1122,f3 1268,1122,d9 1300,1122,fd 1349'],
        // 8行目
        ['a', 1179, '329,1233,e4 376,1218,ee 410 441,1215,f8 483 525,1224,f6 564 604,1224,f6 643 687,1221,f3 719,1216,f8 750 875,1224,df 909,1224,ec 949,1215,f3 993,1215,f9 1030 1184,1224,dd 1215,1224,ef 1262 1372,1218,fa 1416 1453,1218,f9 1495 1529,1218,f9 1568'],
        ['a', 1314, '139,1218,f7 178,1215,b1 206,1215,d5 256,1209,e5 301 329,1233,b9 379,1233,c7 410,1215,d6 439,1215,bf 483,1224,de 525,1224,cf 564,1224,dc 604,1224,b2 643,1221,ea 687,1221,c1 719,1236,e8 750,1209,d8 781,1218,ae 815,1218,cd 844,1212,a0 875,1224,bf 909,1224,bb 949,1215,a3 993,1215,cd 1030,1212,a6 1058,1218,ee 1092,1218,d9 1142,1218,e1 1184,1224,91 1215,1218,de 1262,1221,b7 1299,1221,c1 1338,1218,ce 1372,1221,c3 1416,1218,d2 1453,1218,e5 1495,1221,c3 1529,1218,bd 1560,1221,d6 1568'],
        ['a', 1314, '139,1260,fd 178,1260,ca 209,1260,eb 256,1278,ee 301,1278,f1 348,1278,df 410,1254,e5 439,1254,ca 483,1254,df 525,1254,d2 564,1287,f5 643,1287,fb 719,1270,fd 750,1254,b0 781,1254,e3 844,1254,ad 875,1260,dd 949,1254,cd 998,1254,e9 1030,1260,dc 1058,1260,fb 1184,1260,e4 1262,1260,cf 1307,1260,f5 1338,1266,e6 1416,1266,e3 1495,1278,ee 1529,1278,c3 1560,1278,fb 1568'],
        ['a', 1350, '256,1305,ef 301 564,1300,f6 643 875,1305,dd 949 1030,1305,dc 1058 1184,1290,e4 1262 1338,1305,e6 1416'],
        ['a', 1314, '178,1305,fd 256 750,1284,fd 781 844,1284,eb 875 1262,1293,fd 1338 1495,1308,fd 1568'],
        ['b', 1179, '0,1218,fb 143,1242,f3 171,1230,f1 227,1215,fb 274,1215,f8 308,1224,f1 358'],
        ['b', 1350, '143,1272,f5 227 308,1224,f3 358 473,1269,ef 552'],
        ['b', 1308, '0,1221,c3 14,1218,be 48,1218,d9 81,1218,cc 115,1218,c5 143 171,1230,d4 227,1215,f3 274,1215,b8 308,1224,e2 358,1212,bd 386,1212,d5 442,1212,d2 473'],
        ['b', 1308, '0,1278,ee 14,1278,c2 48,1278,f5 81,1278,fb 115,1278,c5 143,1272,f5 227,1272,eb 274,1272,e3 308,1266,f3 358,1269,cc 395,1269,f0 426,1269,da 473'],
        ['b', 1269, '473,1212,e6 521']
    ]
};

const NS = 'http://www.w3.org/2000/svg';

function drawStrip(svg, column, base, items) {
    const [left, width] = columns[column];
    const cells = items.split(' ').map(item => item.split(','));
    const toX = x => Math.round(left + x * width / 1568);
    const toY = y => Math.round(y / 3);

    for (let i = 0; i < cells.length - 1; i++) {
        const [x, edge, color] = cells[i];
        const next = cells[i + 1][0];
        if (!color || Number(next) < Number(x)) continue;

        const rect = document.createElementNS(NS, 'rect');
        rect.setAttribute('x', toX(Number(x)));
        rect.setAttribute('y', toY(Math.min(base, edge)));
        rect.setAttribute('width', toX(Number(next)) - toX(Number(x)));
        rect.setAttribute('height', Math.abs(toY(base) - toY(edge)));
        rect.setAttribute('fill', '#' + (color.length === 2 ? color.repeat(3) : color));
        svg.appendChild(rect);
    }
}

for (const id in mosaics) {
    const svg = document.getElementById(id);
    mosaics[id].forEach(([column, base, items]) => drawStrip(svg, column, base, items));
}
```
